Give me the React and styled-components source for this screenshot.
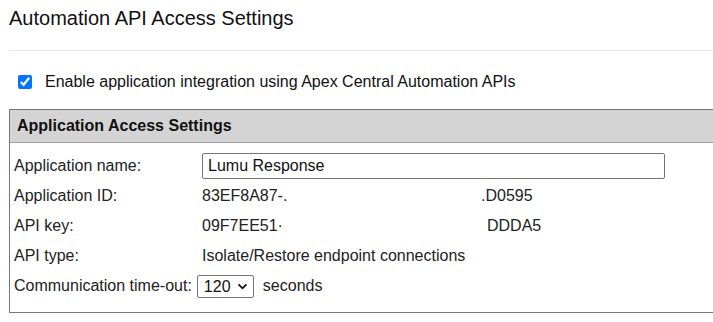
import React from "react";
import styled, { createGlobalStyle } from "styled-components";

const Global = createGlobalStyle`
  html, body { margin: 0; padding: 0; background: #fff; overflow: hidden; }
  body { font-family: Arial, "Liberation Sans", sans-serif; color: #000; }
`;

const chevron =
  "url(\"data:image/svg+xml,%3Csvg xmlns='http://www.w3.org/2000/svg' width='12' height='8' viewBox='0 0 12 8'%3E%3Cpath d='M1.5 1.5 L6 6 L10.5 1.5' fill='none' stroke='%23111' stroke-width='2'/%3E%3C/svg%3E\")";

const Page = styled.div`
  width: 740px;
  padding-left: 9px;
  box-sizing: border-box;
`;

const Title = styled.h1`
  margin: 6px 0 0;
  font-size: 20px;
  line-height: 24px;
  font-weight: normal;
  color: #111;
`;

const Divider = styled.div`
  height: 1px;
  background: #e5e5e5;
  margin-top: 20px;
`;

const CheckRow = styled.label`
  display: flex;
  align-items: center;
  height: 20px;
  margin: 21px 0 0 9px;
  font-size: 16px;
  color: #111;
`;

const Check = styled.input`
  width: 14px;
  height: 14px;
  margin: 0 13px 0 0;
  accent-color: #0075ff;
`;

const Panel = styled.section`
  margin-top: 17px;
  border: 1px solid #777;
  border-right: none;
`;

const PanelHeader = styled.div`
  height: 32px;
  display: flex;
  align-items: center;
  padding-left: 7px;
  background: #d4d4d4;
  border-bottom: 1px solid #a3a3a3;
  font-size: 16px;
  font-weight: bold;
  color: #111;
`;

const Body = styled.div`
  display: grid;
  grid-template-columns: 188px 1fr;
  grid-auto-rows: 30px;
  align-items: center;
  padding: 8px 0 11px 4px;
  font-size: 16px;
  color: #222;
`;

const Label = styled.div``;

const Value = styled.div`
  display: flex;
  white-space: nowrap;
`;

const Head = styled.span`
  display: inline-block;
  width: ${(p) => p.$w}px;
`;

const TextInput = styled.input`
  box-sizing: border-box;
  width: 463px;
  height: 26px;
  border: 1px solid #767676;
  border-radius: 2px;
  padding: 0 5px;
  font: 16px Arial, "Liberation Sans", sans-serif;
  color: #111;
  outline: none;
`;

const FullRow = styled.div`
  grid-column: 1 / span 2;
  display: flex;
  align-items: center;
`;

const Select = styled.select`
  appearance: none;
  -webkit-appearance: none;
  box-sizing: border-box;
  height: 23px;
  width: 57px;
  margin-left: 5px;
  padding: 0 0 0 6px;
  border: 1px solid #767676;
  border-radius: 2px;
  font: 16px Arial, "Liberation Sans", sans-serif;
  color: #111;
  background: #fff ${chevron} no-repeat right 5px center;
  background-size: 11px 7px;
`;

const Unit = styled.span`
  margin-left: 9px;
`;

export default function App() {
  return (
    <Page>
      <Global />
      <Title>Automation API Access Settings</Title>
      <Divider />
      <CheckRow>
        <Check type="checkbox" defaultChecked />
        Enable application integration using Apex Central Automation APIs
      </CheckRow>
      <Panel>
        <PanelHeader>Application Access Settings</PanelHeader>
        <Body>
          <Label>Application name:</Label>
          <Value>
            <TextInput defaultValue="Lumu Response" />
          </Value>
          <Label>Application ID:</Label>
          <Value>
            <Head $w={279}>83EF8A87-.</Head>
            <span>.D0595</span>
          </Value>
          <Label>API key:</Label>
          <Value>
            <Head $w={285}>09F7EE51·</Head>
            <span>DDDA5</span>
          </Value>
          <Label>API type:</Label>
          <Value>Isolate/Restore endpoint connections</Value>
          <FullRow>
            Communication time-out:
            <Select defaultValue="120">
              <option>30</option>
              <option>60</option>
              <option>120</option>
              <option>300</option>
            </Select>
            <Unit>seconds</Unit>
          </FullRow>
        </Body>
      </Panel>
    </Page>
  );
}
